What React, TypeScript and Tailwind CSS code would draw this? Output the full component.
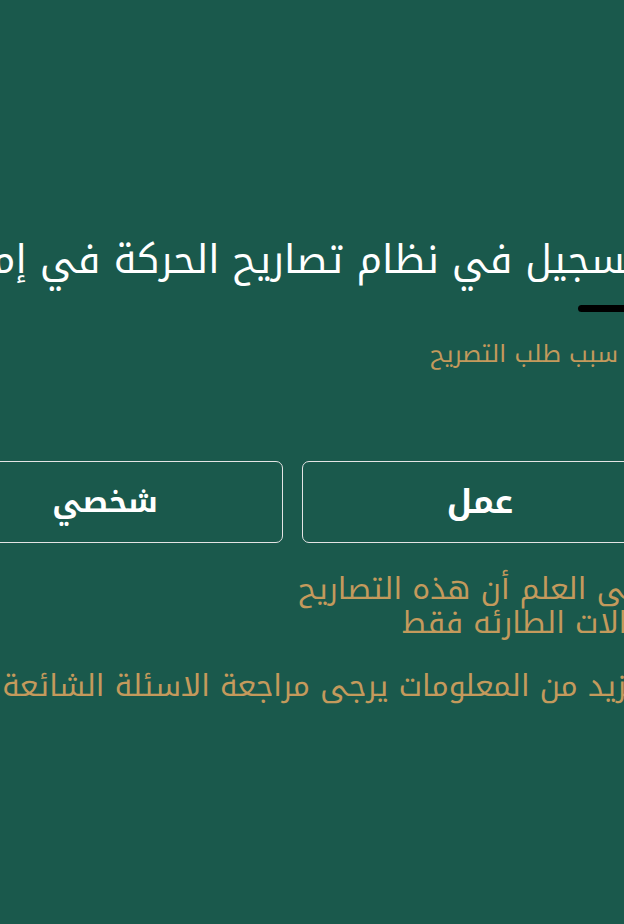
import React from "react";

export default function App() {
  const font = { fontFamily: '"Noto Kufi Arabic", "Noto Sans Arabic", "DejaVu Sans", sans-serif' };
  return (
    <div dir="rtl" className="w-[624px] h-[924px] overflow-hidden bg-[#1a594c]" style={font}>
      <div className="w-[738px] -mr-[41px] pt-[236px]">
        <h1 className="text-white text-[39px] leading-[48px] whitespace-nowrap">
          التسجيل في نظام تصاريح الحركة في إمارة دبي
        </h1>
        <div className="mt-[21px] mr-[7px] w-[80px] h-[7px] rounded-full bg-black" />
        <p className="mt-[27px] text-[24px] leading-[30px] text-[#c49a5c] whitespace-nowrap">اختر سبب طلب التصريح</p>
        <div className="mt-[92px] mr-[7px] grid grid-cols-2 gap-[19px]">
          <button className="h-[82px] rounded-[7px] border-[1.5px] border-[#e4e4e4] text-white text-[33px] leading-[40px] font-bold">
            عمل
          </button>
          <button className="h-[82px] rounded-[7px] border-[1.5px] border-[#e4e4e4] text-white text-[30px] leading-[40px] font-bold">
            شخصي
          </button>
        </div>
        <p className="mt-[29px] text-[30px] leading-[34px] text-[#c49a5c] whitespace-nowrap">
          يرجى العلم أن هذه التصاريح
          <br />
          للحالات الطارئه فقط
        </p>
        <p className="mt-[29px] text-[30px] leading-[34px] text-[#c49a5c] whitespace-nowrap">
          للمزيد من المعلومات يرجى مراجعة الاسئلة الشائعة
        </p>
      </div>
    </div>
  );
}
